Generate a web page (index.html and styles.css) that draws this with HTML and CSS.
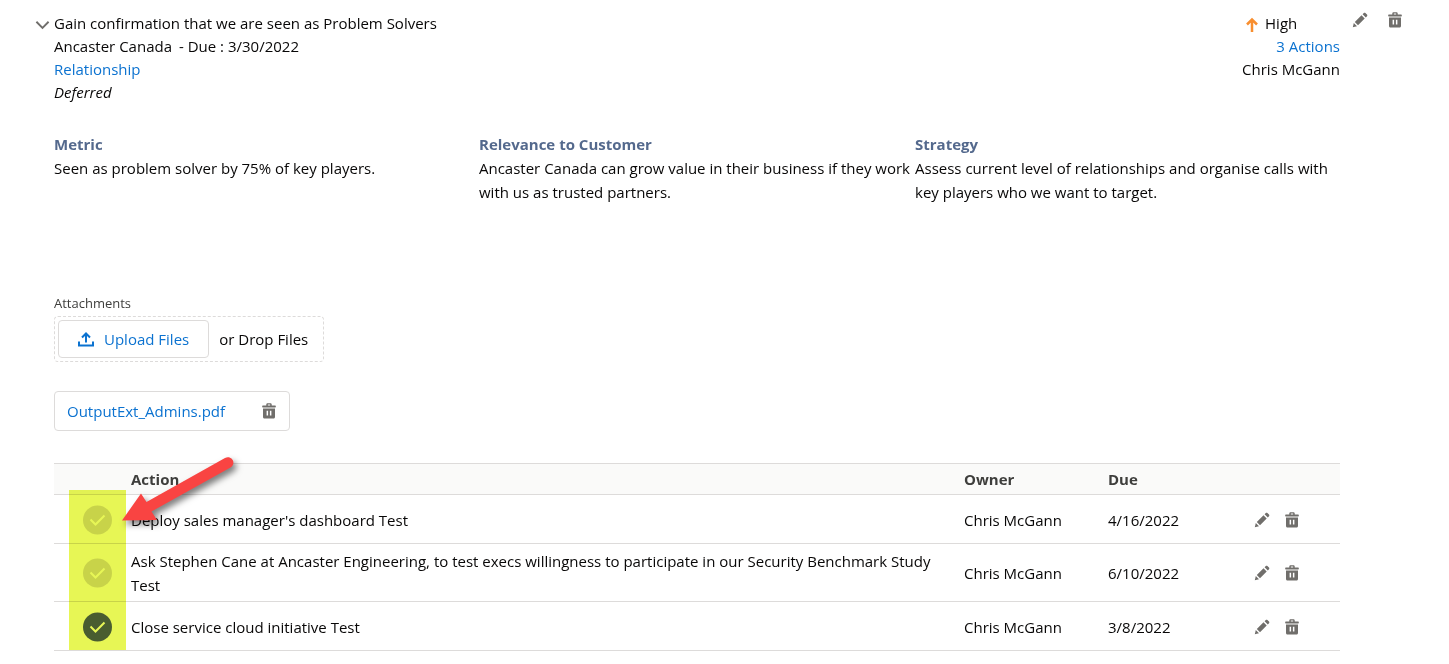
FILE: index.html
```html
<!DOCTYPE html>
<html lang="en">
<head>
    <meta charset="UTF-8" />
    <meta name="viewport" content="width=device-width, initial-scale=1" />
    <title>Objective</title>
    <link rel="stylesheet" href="styles.css">
</head>
<body>
    <!-- Shared icons -->
    <svg class="sprite" aria-hidden="true">
        <symbol id="edit" viewBox="0 0 16 16">
            <path d="M.8 15.200l1-4.200 3.200 3.200zM2.800 10l6.700-6.700 3.200 3.200-6.700 6.700zM10.600 2.200l1.200-1.200c.5-.5 1.100-.5 1.600 0l1.600 1.600c.5.5.5 1.100 0 1.600L13.800 5.400z"/>
        </symbol>
        <symbol id="trash" viewBox="0 0 16 16">
            <path fill-rule="evenodd" d="M1.800 2.500h3.500V1.500C5.300.7 5.900.2 6.700.2h2.600c.8 0 1.400.5 1.400 1.300v1h3.500c.4 0 .6.200.6.500v.9c0 .3-.2.500-.6.500H1.800c-.4 0-.6-.2-.6-.5V3c0-.3.200-.5.6-.5zM6.800 2.500h2.400v-.9H6.800zM2 5.600h12v8.400c0 .9-.6 1.500-1.500 1.500h-9C2.600 15.500 2 14.900 2 14zM5.600 7.800v4.700h1.500V7.800zM8.900 7.800v4.700h1.500V7.800z"/>
        </symbol>
        <symbol id="check" viewBox="0 0 30 30">
            <circle cx="15.500" cy="15" r="14.500"/>
            <path class="tick" d="M8.500 14.500l5 5L22.500 10.500"/>
        </symbol>
    </svg>

    <main class="objective">
        <button class="icon-button toggle" aria-label="Collapse" aria-expanded="true">
            <svg viewBox="0 0 16 16"><path d="M1.500 4.500L8 11l6.500-6.500"/></svg>
        </button>

        <header class="summary">
            <div>
                <div>Gain confirmation that we are seen as Problem Solvers</div>
                <div class="account"><span>Ancaster Canada</span><span>- Due : 3/30/2022</span></div>
                <a href="#">Relationship</a>
                <div><em>Deferred</em></div>
            </div>
            <div class="status">
                <div class="priority">
                    <svg viewBox="0 0 12 16"><path d="M6 16V4M1 8.500l5-5 5 5"/></svg>
                    High
                </div>
                <a href="#">3 Actions</a>
                <div>Chris McGann</div>
            </div>
        </header>

        <div class="tools">
            <button class="icon-button" aria-label="Edit objective"><svg><use href="#edit"/></svg></button>
            <button class="icon-button" aria-label="Delete objective"><svg><use href="#trash"/></svg></button>
        </div>

        <div class="content">
            <section class="details">
                <div>
                    <h2>Metric</h2>
                    <p>Seen as problem solver by 75% of key players.</p>
                </div>
                <div>
                    <h2>Relevance to Customer</h2>
                    <p>Ancaster Canada can grow value in their business if they work with us as trusted partners.</p>
                </div>
                <div>
                    <h2>Strategy</h2>
                    <p>Assess current level of relationships and organise calls with key players who we want to target.</p>
                </div>
            </section>

            <section>
                <div class="label" id="attachments">Attachments</div>
                <div class="dropzone" role="group" aria-labelledby="attachments">
                    <button class="upload">
                        <svg viewBox="0 0 16 16"><path d="M8 11.500V3M4 6.500l4-4 4 4M1 10.500v4h14v-4"/></svg>
                        Upload Files
                    </button>
                    <span>or Drop Files</span>
                </div>
                <div class="file">
                    <a href="#">OutputExt_Admins.pdf</a>
                    <button class="icon-button" aria-label="Delete file"><svg><use href="#trash"/></svg></button>
                </div>
            </section>

            <div class="actions">
                <table>
                    <thead>
                        <tr>
                            <th class="col-check"></th>
                            <th>Action</th>
                            <th class="col-owner">Owner</th>
                            <th class="col-due">Due</th>
                            <th class="col-tools"></th>
                        </tr>
                    </thead>
                    <tbody>
                        <tr>
                            <td><button class="check" aria-label="Mark complete"><svg><use href="#check"/></svg></button></td>
                            <td>Deploy sales manager's dashboard Test</td>
                            <td>Chris McGann</td>
                            <td>4/16/2022</td>
                            <td>
                                <div class="row-tools">
                                    <button class="icon-button" aria-label="Edit action"><svg><use href="#edit"/></svg></button>
                                    <button class="icon-button" aria-label="Delete action"><svg><use href="#trash"/></svg></button>
                                </div>
                            </td>
                        </tr>
                        <tr>
                            <td><button class="check" aria-label="Mark complete"><svg><use href="#check"/></svg></button></td>
                            <td>Ask Stephen Cane at Ancaster Engineering, to test execs willingness to participate in our Security Benchmark Study Test</td>
                            <td>Chris McGann</td>
                            <td>6/10/2022</td>
                            <td>
                                <div class="row-tools">
                                    <button class="icon-button" aria-label="Edit action"><svg><use href="#edit"/></svg></button>
                                    <button class="icon-button" aria-label="Delete action"><svg><use href="#trash"/></svg></button>
                                </div>
                            </td>
                        </tr>
                        <tr>
                            <td><button class="check done" aria-label="Completed"><svg><use href="#check"/></svg></button></td>
                            <td>Close service cloud initiative Test</td>
                            <td>Chris McGann</td>
                            <td>3/8/2022</td>
                            <td>
                                <div class="row-tools">
                                    <button class="icon-button" aria-label="Edit action"><svg><use href="#edit"/></svg></button>
                                    <button class="icon-button" aria-label="Delete action"><svg><use href="#trash"/></svg></button>
                                </div>
                            </td>
                        </tr>
                    </tbody>
                </table>
                <!-- Callout over the check column -->
                <div class="highlight"></div>
                <svg class="arrow" viewBox="0 0 116 76" aria-hidden="true">
                    <path d="M1 66.500L20 39.500 25.500 48 104 4C110.500 1 116 9 109.500 13.500L30.500 57.500 36 66z"/>
                </svg>
            </div>
        </div>
    </main>
</body>
</html>
```

FILE: styles.css
```css
:root {
    --link: #0b72d0;
    --heading: #54698d;
    --icon: #706e6b;
    --border: #dddbda;
    --highlight: #e7f655;
    --arrow: #f94442;
}

* {
    box-sizing: border-box;
    margin: 0;
    padding: 0;
}

body {
    font-family: "Segoe UI", "Open Sans", "Noto Sans", sans-serif;
    font-size: 15px;
    line-height: 24px;
    color: #080707;
    background: #fff;
}

a {
    color: var(--link);
    text-decoration: none;
}

a:hover {
    text-decoration: underline;
}

button {
    font: inherit;
    background: none;
    border: none;
    cursor: pointer;
}

.sprite {
    position: absolute;
    width: 0;
    height: 0;
}

.icon-button {
    display: flex;
}

.icon-button svg {
    width: 16px;
    height: 16px;
    fill: var(--icon);
}

.objective {
    display: grid;
    grid-template-columns: 19px 1fr 109px;
    padding: 12px 0 12px 35px;
}

.toggle {
    align-self: start;
    padding-top: 5px;
}

.toggle svg {
    width: 15px;
    fill: none;
    stroke: var(--icon);
    stroke-width: 2;
}

.summary {
    display: flex;
    justify-content: space-between;
    line-height: 23px;
}

.account {
    display: flex;
    gap: 7px;
}

.status {
    display: flex;
    flex-direction: column;
    align-items: flex-end;
}

.priority {
    display: flex;
    align-items: center;
    align-self: stretch;
    gap: 7px;
    padding-left: 4px;
}

.priority svg {
    width: 12px;
    height: 16px;
    fill: none;
    stroke: #f88e2f;
    stroke-width: 2.5;
}

.tools {
    display: flex;
    align-items: flex-start;
    gap: 19px;
    padding-left: 12px;
}

.content {
    grid-column: 2;
}

/* Metric, relevance and strategy */
.details {
    display: grid;
    grid-template-columns: 425fr 436fr 425fr;
    min-height: 162px;
    margin-top: 28px;
}

h2,
th {
    font-size: 15px;
    font-weight: 700;
}

h2 {
    color: var(--heading);
}

/* Attachments */
.label {
    font-size: 13px;
    line-height: 18px;
    color: #3e3e3c;
    margin-bottom: 4px;
}

.dropzone {
    display: flex;
    align-items: center;
    gap: 10px;
    width: fit-content;
    padding: 3px 15px 3px 3px;
    border: 1px dashed var(--border);
    border-radius: 4px;
}

.upload {
    display: flex;
    align-items: center;
    gap: 10px;
    padding: 6px 19px;
    color: var(--link);
    border: 1px solid var(--border);
    border-radius: 4px;
}

.upload svg {
    width: 16px;
    height: 16px;
    fill: none;
    stroke: var(--link);
    stroke-width: 2;
}

.file {
    display: flex;
    align-items: center;
    justify-content: space-between;
    width: 236px;
    margin-top: 29px;
    padding: 7px 12px;
    border: 1px solid var(--border);
    border-radius: 4px;
}

/* Action list */
.actions {
    position: relative;
    margin-top: 32px;
}

table {
    width: 100%;
    table-layout: fixed;
    border-collapse: collapse;
}

tr {
    border-bottom: 1px solid var(--border);
}

thead tr {
    background: #fafaf9;
    border-top: 1px solid var(--border);
}

th {
    height: 31px;
    text-align: left;
    color: #3e3e3c;
}

td {
    height: 49px;
    padding: 5px 0 4px;
}

td:nth-child(2) {
    padding-right: 32px;
}

.col-check {
    width: 77px;
}

.col-owner {
    width: 144px;
}

.col-due {
    width: 146px;
}

.col-tools {
    width: 86px;
}

.check {
    display: flex;
    margin-left: 28px;
}

.check svg {
    width: 30px;
    height: 30px;
    fill: #dddbda;
    stroke: #fff;
    stroke-width: 0;
}

.check.done svg {
    fill: #506090;
}

.tick {
    fill: none;
    stroke-width: 2;
}

.row-tools {
    display: flex;
    gap: 14px;
}

.highlight {
    position: absolute;
    top: 27px;
    bottom: 1px;
    left: 15px;
    width: 57px;
    background: var(--highlight);
    mix-blend-mode: multiply;
}

.arrow {
    position: absolute;
    top: -9px;
    left: 67px;
    width: 116px;
    height: 76px;
    overflow: visible;
    fill: var(--arrow);
    filter: drop-shadow(3px 4px 3px rgba(0, 0, 0, 0.5));
}
```
